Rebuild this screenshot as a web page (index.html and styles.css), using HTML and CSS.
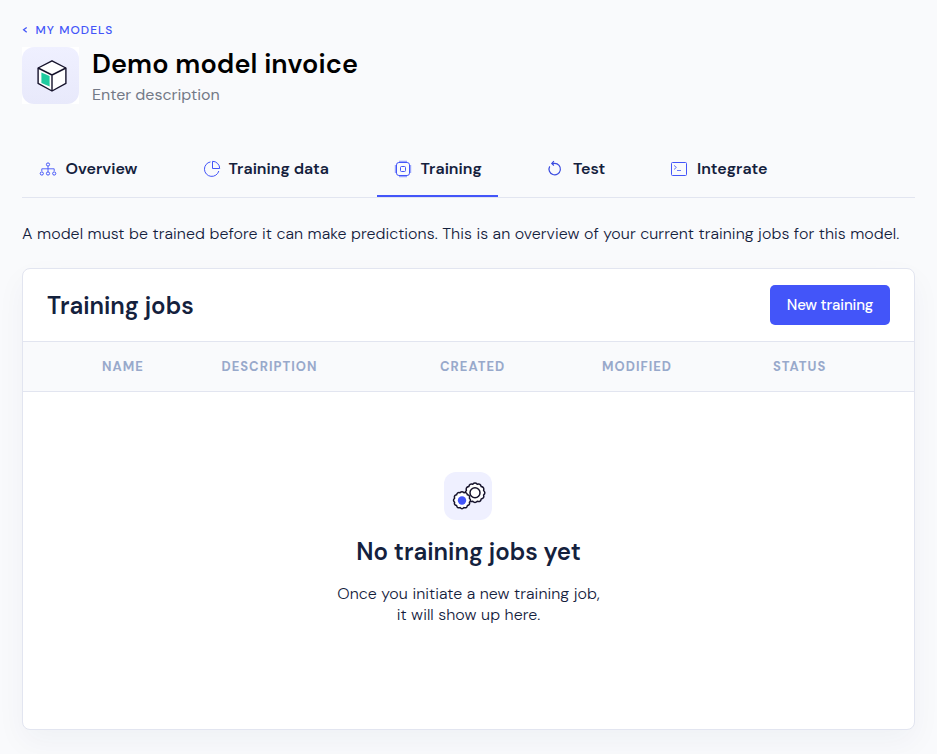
FILE: index.html
```html
<!DOCTYPE html>
<html lang="en">
<head>
<meta charset="utf-8">
<title>Demo model invoice</title>
<link rel="stylesheet" href="styles.css">
</head>
<body>
<a class="back"><svg width="6" height="8" viewBox="0 0 6 8" fill="none" stroke="currentColor" stroke-width="1.3"><path d="M4.7 1.4 1.6 3.8l3.1 2.4"/></svg><span>MY MODELS</span></a>
<header class="model">
  <div class="model-frame"><div class="model-icon">
    <svg width="30" height="34" viewBox="0 0 30 34" stroke="#15122b" stroke-width="1.4" stroke-linejoin="round">
      <path fill="#fff" d="M15 1.8 28.9 9v15.4L15 32 1.1 24.4V9z"/>
      <path fill="#1fcb9f" stroke="none" d="m4.4 13.5 8.2 3.6v10.5l-8.2-3.5z"/>
      <path fill="none" d="m1.1 9 13.9 7 13.9-7M15 16v16"/>
    </svg>
  </div></div>
  <div>
    <h1>Demo model invoice</h1>
    <p class="description">Enter description</p>
  </div>
</header>
<nav class="tabs">
  <a class="tab overview">
    <svg width="18" height="18" viewBox="0 0 18 18" fill="none" stroke="#4355f9"><circle cx="9" cy="4.5" r="1.6"/><circle cx="2.8" cy="13.5" r="1.6"/><circle cx="9" cy="13.5" r="1.6"/><circle cx="15.2" cy="13.5" r="1.6"/><path d="M9 6.1v5.8M2.8 11V8.8h12.4V11" stroke-width=".9"/></svg>
    <span>Overview</span></a>
  <a class="tab data">
    <svg width="18" height="18" viewBox="0 0 18 18" fill="none" stroke="#4355f9"><path d="M7.5 1.9A7.3 7.3 0 1 0 15.8 11M9.5 1.3v7.2h7.2a7.2 7.2 0 0 0-7.2-7.2z"/></svg>
    <span>Training data</span></a>
  <a class="tab training active">
    <svg width="18" height="18" viewBox="0 0 18 18" fill="none" stroke="#4355f9"><path stroke="#9aa5fb" stroke-width="1.4" d="M5 1.5h8M5 16.5h8M1.5 5v8M16.5 5v8"/><rect x="2.5" y="2.5" width="13" height="13" rx="2.4"/><rect x="6.5" y="6.5" width="5" height="5" rx="1"/></svg>
    <span>Training</span></a>
  <a class="tab test">
    <svg width="18" height="18" viewBox="0 0 18 18" fill="none" stroke="#3a4be0" stroke-width="1.2"><path d="M6.3 3.4h2.4a5.7 5.7 0 1 1-5 3M7.9 1.2 5.8 3.4l2.1 2.1"/></svg>
    <span>Test</span></a>
  <a class="tab integrate">
    <svg width="18" height="18" viewBox="0 0 18 18" fill="none" stroke="#4355f9"><rect x="1.5" y="2.5" width="15" height="13" rx="1"/><path d="m4 5.4 2.4 2L4 9.5M7 10.5h4" stroke-width=".8"/></svg>
    <span>Integrate</span></a>
</nav>
<p class="intro">A model must be trained before it can make predictions. This is an overview of your current training jobs for this model.</p>
<section class="card">
  <div class="card-head"><h2>Training jobs</h2><button>New training</button></div>
  <div class="columns"><span>NAME</span><span>DESCRIPTION</span><span>CREATED</span><span>MODIFIED</span><span>STATUS</span></div>
  <div class="empty">
    <div class="empty-icon">
      <svg width="36" height="32" viewBox="0 0 36 32" fill="#fff" stroke="#15122b" stroke-width="1.5" stroke-linejoin="round">
        <path d="M22.7 3.3q2.3-2.5 4.6 0 3.2-1.1 3.9 2.3 3.4.7 2.4 3.9 2.5 2.3 0 4.6 1 3.2-2.4 3.9-.7 3.4-3.9 2.3-2.3 2.5-4.6 0-3.2 1.1-3.9-2.3-3.4-.7-2.4-3.9-2.5-2.3 0-4.6-1-3.2 2.4-3.9.7-3.4 3.9-2.3z"/>
        <circle cx="25" cy="11.8" r="5"/>
        <path d="M10 11.8q2-2.2 4 0 2.8-.9 3.4 2 2.9.6 2 3.4 2.2 2 0 4 .9 2.8-2 3.4-.6 2.9-3.4 2-2 2.2-4 0-2.8.9-3.4-2-2.9-.6-2-3.4-2.2-2 0-4-.9-2.8 2-3.4.6-2.9 3.4-2z"/>
        <circle cx="12" cy="19.5" r="4.2" fill="#4355f9" stroke="none"/>
      </svg>
    </div>
    <h3>No training jobs yet</h3>
    <p>Once you initiate a new training job,<br>it will show up here.</p>
  </div>
</section>
</body>
</html>
```
FILE: styles.css
```css
* { box-sizing: border-box; }
body { margin: 0; height: 754px; overflow: hidden; padding: 22px 22px 0; background: #f9fafc; color: #14213d; font-family: "DM Sans", Inter, "Liberation Sans", sans-serif; font-size: 16px; }
h1, h2, h3, p { margin: 0; white-space: nowrap; }
.back { display: flex; align-items: center; gap: 7.5px; height: 16px; color: #4355f9; font-size: 12px; font-weight: 550; letter-spacing: 1.05px; }
.model { display: flex; gap: 13px; margin-top: 9px; height: 57px; }
.model-frame { background: #fff; }
.model-icon { width: 57px; height: 57px; padding-left: 2px; border-radius: 12px; background: linear-gradient(#eff0ff, #e8e9fb); display: flex; align-items: center; justify-content: center; }
h1 { color: #000; font-size: 27px; line-height: 34px; font-weight: 600; letter-spacing: .1px; }
.description { color: #737987; line-height: 28px; letter-spacing: -.03px; }
.tabs { display: flex; gap: 32px; margin-top: 37px; height: 57px; border-bottom: 1px solid #e2e5f0; }
.tab { display: flex; align-items: center; gap: 8.5px; height: 56px; padding-left: 17px; font-weight: 600; white-space: nowrap; }
.tab span { padding-bottom: 2px; }
.overview { width: 131px; }
.data { width: 160px; padding-left: 17.5px; gap: 8px; }
.training { width: 121px; }
.test { width: 92px; padding-left: 16px; gap: 9px; }
.integrate { width: 130px; padding-left: 16px; gap: 9px; }
.active { border-bottom: 2px solid #4355f9; padding-top: 2px; }
.intro { margin-top: 24px; line-height: 24px; font-weight: 350; letter-spacing: .066px; }
.card { margin-top: 22px; height: 462px; border: 1px solid #e2e5f0; border-radius: 8px; background: #fff; box-shadow: 0 12px 30px rgba(30, 40, 100, .045); }
.card-head { display: flex; align-items: center; justify-content: space-between; height: 72px; padding: 0 24px; }
h2, h3 { font-size: 24px; font-weight: 600; }
h2 { padding-top: 1px; }
button { width: 120px; height: 40px; padding: 0; border: 0; border-radius: 5px; background: #4355f9; color: #fff; font: 500 15px "DM Sans", Inter, sans-serif; letter-spacing: -.15px; }
.columns { display: grid; grid-template-columns: 119.5px 218.5px 162px 171px 1fr; align-items: center; height: 51px; padding-left: 79px; border: solid #e2e5f0; border-width: 1px 0; background: #f9fafc; color: #98a9cb; font-size: 13px; font-weight: 700; letter-spacing: 1px; }
.empty { display: flex; flex-direction: column; align-items: center; padding-top: 80px; text-align: center; }
.empty-icon { width: 48px; height: 48px; margin-right: 1px; border-radius: 12px; background: #eff0ff; display: flex; align-items: center; justify-content: center; }
.empty-icon svg { margin-top: 2px; }
h3 { margin-top: 16px; line-height: 32px; }
.empty p { margin-top: 15px; line-height: 21px; font-weight: 350; letter-spacing: .066px; }
```
